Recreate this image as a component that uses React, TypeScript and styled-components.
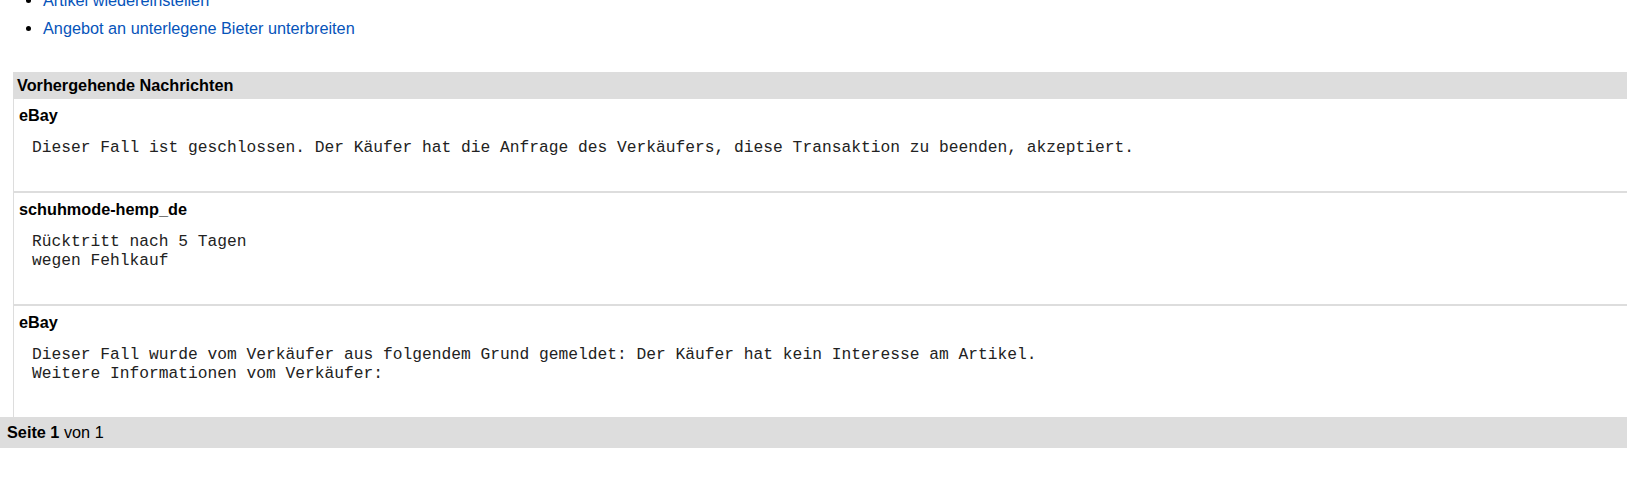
import React from "react";
import styled, { createGlobalStyle } from "styled-components";

interface IMessage {
  author: string;
  lines: string[];
}

interface IMessageBlockProps {
  $first?: boolean;
}

const GlobalStyle = createGlobalStyle`
  body {
    margin: 0;
    background: #ffffff;
    font-family: "Liberation Sans", Arial, sans-serif;
    font-size: 16.25px;
    color: #000000;
  }
`;

const Page = styled.div`
  display: flex;
  flex-direction: column;
  overflow: hidden;
  height: 477px;
`;

const ActionList = styled.ul`
  margin: -9px 0 35px 0;
  padding-left: 43px;
  list-style: disc;
`;

const ActionItem = styled.li`
  line-height: 18px;
  margin-bottom: 10px;

  &:last-child {
    margin-bottom: 0;
  }
`;

const ActionLink = styled.a`
  color: #0654ba;
  text-decoration: none;
  cursor: pointer;
`;

const History = styled.section`
  display: flex;
  flex-direction: column;
  margin-left: 13px;
`;

const HistoryTitle = styled.h4`
  margin: 0;
  height: 27px;
  line-height: 27px;
  padding-left: 4px;
  background: #dddddd;
  font-size: 16.25px;
  font-weight: bold;
`;

const MessageList = styled.div`
  display: flex;
  flex-direction: column;
  border-left: 1px solid #dddddd;
`;

const MessageBlock = styled.article<IMessageBlockProps>`
  padding: 7px 0 7px 5px;
  border-top: ${({ $first }) => ($first ? "none" : "2px solid #dddddd")};
`;

const Author = styled.div`
  font-weight: bold;
  line-height: 18px;
`;

const Body = styled.pre`
  margin: 14px 0 26px 13px;
  font-family: "Liberation Mono", "Courier New", monospace;
  font-size: 16.25px;
  line-height: 19.5px;
  color: #222222;
`;

const Pager = styled.footer`
  height: 31px;
  line-height: 31px;
  padding-left: 7px;
  background: #dddddd;
`;

const messages: IMessage[] = [
  {
    author: "eBay",
    lines: [
      "Dieser Fall ist geschlossen. Der Käufer hat die Anfrage des Verkäufers, diese Transaktion zu beenden, akzeptiert.",
    ],
  },
  {
    author: "schuhmode-hemp_de",
    lines: ["Rücktritt nach 5 Tagen", "wegen Fehlkauf"],
  },
  {
    author: "eBay",
    lines: [
      "Dieser Fall wurde vom Verkäufer aus folgendem Grund gemeldet: Der Käufer hat kein Interesse am Artikel.",
      "Weitere Informationen vom Verkäufer:",
    ],
  },
];

const App = () => {
  return (
    <>
      <GlobalStyle />
      <Page>
        <ActionList>
          <ActionItem>
            <ActionLink>Artikel wiedereinstellen</ActionLink>
          </ActionItem>
          <ActionItem>
            <ActionLink>Angebot an unterlegene Bieter unterbreiten</ActionLink>
          </ActionItem>
        </ActionList>

        <History>
          <HistoryTitle>Vorhergehende Nachrichten</HistoryTitle>
          <MessageList>
            {messages.map((msg, i) => (
              <MessageBlock key={i} $first={i === 0}>
                <Author>{msg.author}</Author>
                <Body>{msg.lines.join("\n")}</Body>
              </MessageBlock>
            ))}
          </MessageList>
        </History>

        <Pager>
          <b>Seite 1</b> von 1
        </Pager>
      </Page>
    </>
  );
};

export default App;
